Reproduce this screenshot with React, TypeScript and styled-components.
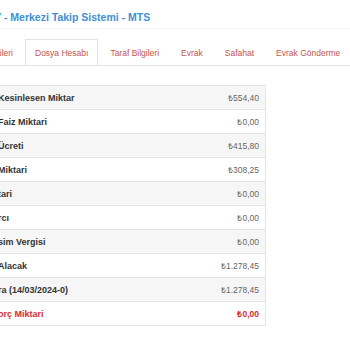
import * as React from "react";
import styled, { createGlobalStyle } from "styled-components";

const GlobalStyle = createGlobalStyle`
  html, body {
    margin: 0;
    padding: 0;
    background: #fff;
    overflow: hidden;
  }
  body {
    font-family: "Liberation Sans", Arial, sans-serif;
    color: #333;
  }
`;

const Page = styled.div`
  width: 350px;
  height: 350px;
  overflow: hidden;
`;

const Header = styled.div`
  height: 28px;
  border-bottom: 1px solid #f4f4f4;
  overflow: hidden;
`;

const Title = styled.h1`
  margin: 0 0 0 -6px;
  padding-top: 10px;
  font-size: 10.5px;
  line-height: 14px;
  font-weight: bold;
  color: #3d8fd6;
  white-space: nowrap;
`;

const Nav = styled.ul`
  display: flex;
  margin: 10px 0 0;
  padding: 0;
  list-style: none;
  border-bottom: 1px solid #e3e3e3;
  white-space: nowrap;
  overflow: hidden;
`;

const Tab = styled.li<{ $active?: boolean; $clipped?: boolean }>`
  flex-shrink: 0;
  display: flex;
  align-items: center;
  justify-content: ${(p) => (p.$clipped ? "flex-end" : "center")};
  height: 25px;
  padding: 0 9px;
  margin-right: 2px;
  margin-bottom: -1px;
  font-size: 8.5px;
  color: #c4534f;
  border: 1px solid ${(p) => (p.$active ? "#e3e3e3" : "transparent")};
  border-bottom-color: ${(p) => (p.$active ? "#fff" : "transparent")};
  background: #fff;
  ${(p) =>
    p.$clipped &&
    `
    width: 13px;
    padding-left: 0;
    overflow: hidden;
    border-left: none;
  `}
`;

const Table = styled.div`
  margin: 19px 0 0 -11px;
  width: 275px;
  border: 1px solid #e6e6e6;
  border-top: none;
`;

const Row = styled.div<{ $striped: boolean }>`
  display: flex;
  align-items: center;
  justify-content: space-between;
  height: 23px;
  padding: 0 6px 0 8px;
  border-top: 1px solid #e3e3e3;
  background: ${(p) => (p.$striped ? "#f6f6f6" : "#fff")};
`;

const Label = styled.span<{ $danger?: boolean }>`
  font-size: 9px;
  font-weight: bold;
  color: ${(p) => (p.$danger ? "#dd2a2f" : "#333")};
  white-space: nowrap;
`;

const Value = styled.span<{ $danger?: boolean }>`
  font-size: 8.5px;
  font-weight: ${(p) => (p.$danger ? "bold" : "normal")};
  color: ${(p) => (p.$danger ? "#dd2a2f" : "#666")};
`;

const tabs = ["Dosya Hesabı", "Taraf Bilgileri", "Evrak", "Safahat", "Evrak Gönderme"];

const rows = [
  { label: "Kesinlesen Miktar", value: "₺554,40" },
  { label: "Faiz Miktari", value: "₺0,00" },
  { label: "Ücreti", value: "₺415,80" },
  { label: "Miktari", value: "₺308,25" },
  { label: "tari", value: "₺0,00" },
  { label: "rcı", value: "₺0,00" },
  { label: "sim Vergisi", value: "₺0,00" },
  { label: "Alacak", value: "₺1.278,45" },
  { label: "ra (14/03/2024-0)", value: "₺1.278,45" },
  { label: "orç Miktari", value: "₺0,00", danger: true },
];

const App = () => (
  <Page>
    <GlobalStyle />
    <Header>
      <Title>V - Merkezi Takip Sistemi - MTS</Title>
    </Header>

    <Nav>
      <Tab $clipped>Genel Bilgileri</Tab>
      {tabs.map((t, i) => (
        <Tab key={t} $active={i === 0}>
          {t}
        </Tab>
      ))}
    </Nav>

    <Table>
      {rows.map((r, i) => (
        <Row key={i} $striped={i % 2 === 0}>
          <Label $danger={r.danger}>{r.label}</Label>
          <Value $danger={r.danger}>{r.value}</Value>
        </Row>
      ))}
    </Table>
  </Page>
);

export default App;
